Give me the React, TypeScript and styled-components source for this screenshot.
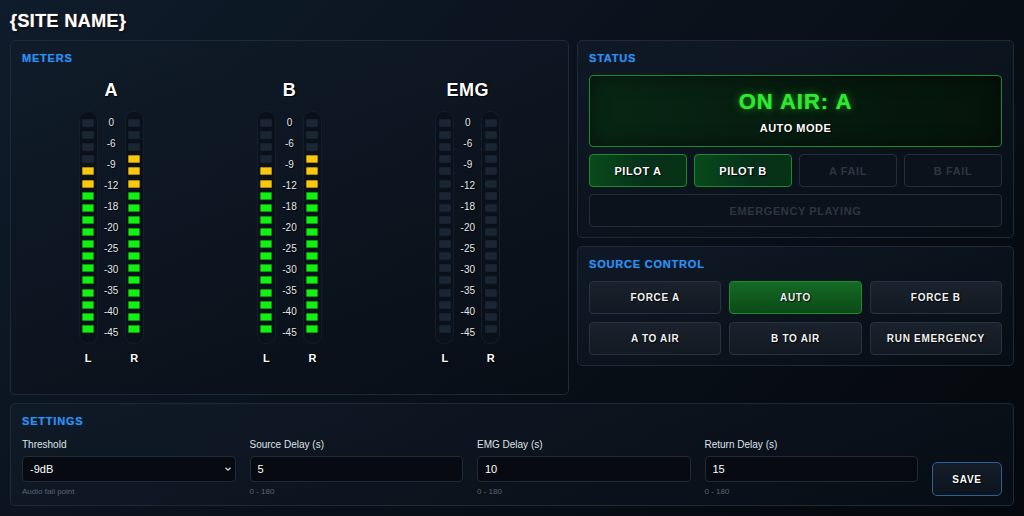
import styled, { createGlobalStyle } from 'styled-components'

const GlobalStyle = createGlobalStyle`
  html, body {
    margin: 0;
    padding: 0;
  }
  body {
    background: linear-gradient(135deg, #0f1c2b 0%, #0a121c 45%, #05080c 100%);
    min-height: 100vh;
    color: #fff;
    font-family: 'Liberation Sans', Arial, sans-serif;
  }
  * {
    box-sizing: border-box;
  }
`

type Zone = 'red' | 'yellow' | 'green'

const SEGMENTS = 18
const SCALE = ['0', '-6', '-9', '-12', '-18', '-20', '-25', '-30', '-35', '-40', '-45']

const meters = [
  { name: 'A', left: 14, right: 15 },
  { name: 'B', left: 14, right: 15 },
  { name: 'EMG', left: 0, right: 0 },
]

const zoneFor = (i: number): Zone => (i < 3 ? 'red' : i < 6 ? 'yellow' : 'green')

const MeterBar = ({ level }: { level: number }) => (
  <Bar>
    {Array.from({ length: SEGMENTS }, (_, i) => {
      const lit = i >= SEGMENTS - level
      return <Segment key={i} $zone={zoneFor(i)} $lit={lit} />
    })}
  </Bar>
)

const App = () => {
  return (
    <>
      <GlobalStyle />
      <Page>
        <SiteTitle>{'{SITE NAME}'}</SiteTitle>

        <TopGrid>
          <Panel>
            <PanelTitle>Meters</PanelTitle>
            <MeterGrid>
              {meters.map((m) => (
                <MeterGroup key={m.name}>
                  <MeterName>{m.name}</MeterName>
                  <MeterRow>
                    <MeterBar level={m.left} />
                    <Scale>
                      {SCALE.map((s) => (
                        <ScaleMark key={s}>{s}</ScaleMark>
                      ))}
                    </Scale>
                    <MeterBar level={m.right} />
                  </MeterRow>
                  <ChannelRow>
                    <Channel>L</Channel>
                    <span />
                    <Channel>R</Channel>
                  </ChannelRow>
                </MeterGroup>
              ))}
            </MeterGrid>
          </Panel>

          <SideColumn>
            <Panel>
              <PanelTitle>Status</PanelTitle>
              <OnAirBox>
                <OnAirText>ON AIR: A</OnAirText>
                <ModeText>AUTO MODE</ModeText>
              </OnAirBox>
              <IndicatorRow>
                <Indicator $active>PILOT A</Indicator>
                <Indicator $active>PILOT B</Indicator>
                <Indicator>A FAIL</Indicator>
                <Indicator>B FAIL</Indicator>
              </IndicatorRow>
              <Indicator>EMERGENCY PLAYING</Indicator>
            </Panel>

            <Panel>
              <PanelTitle>Source Control</PanelTitle>
              <ControlGrid>
                <ControlButton>FORCE A</ControlButton>
                <ControlButton $active>AUTO</ControlButton>
                <ControlButton>FORCE B</ControlButton>
                <ControlButton>A TO AIR</ControlButton>
                <ControlButton>B TO AIR</ControlButton>
                <ControlButton>RUN EMERGENCY</ControlButton>
              </ControlGrid>
            </Panel>
          </SideColumn>
        </TopGrid>

        <SettingsPanel>
          <PanelTitle>Settings</PanelTitle>
          <SettingsRow>
            <Field>
              <FieldLabel>Threshold</FieldLabel>
              <SelectWrap>
                <Select defaultValue='-9'>
                  <option value='-6'>-6dB</option>
                  <option value='-9'>-9dB</option>
                  <option value='-12'>-12dB</option>
                  <option value='-18'>-18dB</option>
                </Select>
                <Chevron viewBox='0 0 10 10'>
                  <path d='M2.5 3.8 L5 6.2 L7.5 3.8' />
                </Chevron>
              </SelectWrap>
              <Hint>Audio fail point</Hint>
            </Field>
            <Field>
              <FieldLabel>Source Delay (s)</FieldLabel>
              <Input type='text' defaultValue='5' />
              <Hint>0 - 180</Hint>
            </Field>
            <Field>
              <FieldLabel>EMG Delay (s)</FieldLabel>
              <Input type='text' defaultValue='10' />
              <Hint>0 - 180</Hint>
            </Field>
            <Field>
              <FieldLabel>Return Delay (s)</FieldLabel>
              <Input type='text' defaultValue='15' />
              <Hint>0 - 180</Hint>
            </Field>
            <SaveButton>SAVE</SaveButton>
          </SettingsRow>
        </SettingsPanel>
      </Page>
    </>
  )
}

const heavyShadow = '1px 1px 1px rgba(0, 0, 0, 0.85), 0 0 1px rgba(0, 0, 0, 0.9)'

const Page = styled.div`
  padding: 10px;
  display: flex;
  flex-direction: column;
`

const SiteTitle = styled.h1`
  margin: 0 0 8px;
  font-size: 18px;
  line-height: 22px;
  font-weight: 700;
  letter-spacing: 0.4px;
  color: #fff;
  text-shadow: 1px 1px 2px rgba(0, 0, 0, 0.9), 0 0 1px #fff;
`

const TopGrid = styled.div`
  display: grid;
  grid-template-columns: 559px 1fr;
  gap: 8px;
  align-items: start;
`

const SideColumn = styled.div`
  display: flex;
  flex-direction: column;
  gap: 8px;
`

const Panel = styled.section`
  background: linear-gradient(160deg, rgba(17, 28, 42, 0.75), rgba(8, 14, 22, 0.85));
  border: 1px solid #1e2a38;
  border-radius: 5px;
  padding: 11px 11px 10px;
  display: flex;
  flex-direction: column;
  gap: 7px;
`

const PanelTitle = styled.h2`
  margin: 0 0 3px;
  font-size: 11px;
  line-height: 13px;
  font-weight: 700;
  letter-spacing: 0.8px;
  text-transform: uppercase;
  color: #2f8ff0;
  text-shadow: 0 0 1px rgba(47, 143, 240, 0.6);
`

const MeterGrid = styled.div`
  display: grid;
  grid-template-columns: repeat(3, 1fr);
  padding: 4px 0 19px;
`

const MeterGroup = styled.div`
  display: flex;
  flex-direction: column;
  align-items: center;
`

const MeterName = styled.div`
  font-size: 18px;
  line-height: 22px;
  font-weight: 700;
  letter-spacing: 0.5px;
  margin-bottom: 10px;
  text-shadow: ${heavyShadow};
`

const MeterRow = styled.div`
  display: flex;
  align-items: stretch;
`

const Bar = styled.div`
  width: 19px;
  height: 233px;
  padding: 7px 3px 10px;
  border-radius: 9px;
  background: #0a111b;
  border: 1px solid #141e2a;
  display: flex;
  flex-direction: column;
  justify-content: space-between;
  align-items: center;
`

const litColors: Record<Zone, { bg: string; edge: string }> = {
  red: { bg: '#f03030', edge: '#a01818' },
  yellow: { bg: '#f8c80e', edge: '#b08a08' },
  green: { bg: '#14f014', edge: '#0a9a0a' },
}

const Segment = styled.div<{ $zone: Zone; $lit: boolean }>`
  width: 12px;
  height: 8px;
  border-radius: 1px;
  background: ${(p) => (p.$lit ? litColors[p.$zone].bg : '#1a2634')};
  border: 1px solid ${(p) => (p.$lit ? litColors[p.$zone].edge : '#17212e')};
`

const Scale = styled.div`
  width: 27px;
  padding: 6px 0 5px;
  display: flex;
  flex-direction: column;
  justify-content: space-between;
  align-items: center;
`

const ScaleMark = styled.span`
  font-size: 10px;
  line-height: 12px;
  color: #e6e9ec;
  text-shadow: ${heavyShadow};
`

const ChannelRow = styled.div`
  display: grid;
  grid-template-columns: 19px 27px 19px;
  margin-top: 7px;
`

const Channel = styled.span`
  text-align: center;
  font-size: 11px;
  line-height: 14px;
  font-weight: 700;
  color: #fff;
  text-shadow: ${heavyShadow};
`

const OnAirBox = styled.div`
  height: 72px;
  border: 1px solid #1b8a2a;
  border-radius: 4px;
  background: linear-gradient(90deg, #082614 0%, #061a0e 60%, #05140b 100%);
  box-shadow: inset 0 0 18px rgba(0, 0, 0, 0.5);
  display: flex;
  flex-direction: column;
  align-items: center;
  justify-content: center;
  gap: 8px;
`

const OnAirText = styled.div`
  font-size: 22px;
  line-height: 24px;
  font-weight: 700;
  letter-spacing: 1px;
  color: #2ee82e;
  text-shadow: 0 0 8px rgba(40, 230, 40, 0.55), 0 0 1px #2ee82e;
  margin-top: 2px;
`

const ModeText = styled.div`
  font-size: 11px;
  line-height: 13px;
  font-weight: 700;
  letter-spacing: 0.5px;
  color: #fff;
  text-shadow: ${heavyShadow};
`

const IndicatorRow = styled.div`
  display: grid;
  grid-template-columns: repeat(4, 1fr);
  gap: 7px;
`

const Indicator = styled.div<{ $active?: boolean }>`
  height: 33px;
  border-radius: 4px;
  display: flex;
  align-items: center;
  justify-content: center;
  font-size: 11px;
  font-weight: 700;
  letter-spacing: 0.6px;
  border: 1px solid ${(p) => (p.$active ? '#1d8a2e' : '#232e3b')};
  background: ${(p) =>
    p.$active ? 'linear-gradient(90deg, #0a4a1a, #06301a 60%, #083214)' : '#0b121b'};
  color: ${(p) => (p.$active ? '#fff' : '#2c3642')};
  text-shadow: ${(p) => (p.$active ? heavyShadow : 'none')};
`

const ControlGrid = styled.div`
  display: grid;
  grid-template-columns: repeat(3, 1fr);
  gap: 8px;
`

const ControlButton = styled.button<{ $active?: boolean }>`
  height: 33px;
  border-radius: 4px;
  font-family: 'Liberation Sans', Arial, sans-serif;
  font-size: 10px;
  font-weight: 700;
  letter-spacing: 0.7px;
  color: #f2f2f2;
  cursor: pointer;
  border: 1px solid ${(p) => (p.$active ? '#1f8a2f' : '#29333f')};
  background: ${(p) =>
    p.$active
      ? 'linear-gradient(180deg, #146a24, #0c4a18)'
      : 'linear-gradient(180deg, #1a222d, #121922)'};
  text-shadow: ${heavyShadow};
`

const SettingsPanel = styled(Panel)`
  margin-top: 8px;
  padding: 11px 11px 8px;
  gap: 0;
`

const SettingsRow = styled.div`
  display: grid;
  grid-template-columns: repeat(4, 1fr) 70px;
  gap: 14px;
  align-items: end;
  margin-top: 7px;
`

const Field = styled.div`
  display: flex;
  flex-direction: column;
`

const FieldLabel = styled.label`
  font-size: 10px;
  line-height: 13px;
  color: #dfe3e8;
  margin-bottom: 5px;
`

const fieldBox = `
  width: 100%;
  height: 26px;
  background: #070b11;
  border: 1px solid #212b38;
  border-radius: 4px;
  color: #fff;
  font-family: 'Liberation Sans', Arial, sans-serif;
  font-size: 11px;
  padding: 0 7px;
  outline: none;
`

const Input = styled.input`
  ${fieldBox}
`

const SelectWrap = styled.div`
  position: relative;
`

const Select = styled.select`
  ${fieldBox}
  appearance: none;
`

const Chevron = styled.svg`
  position: absolute;
  right: 3px;
  top: 8px;
  width: 10px;
  height: 10px;
  fill: none;
  stroke: #d8dde2;
  stroke-width: 1.3;
  pointer-events: none;
`

const Hint = styled.span`
  margin-top: 4px;
  font-size: 8px;
  line-height: 11px;
  color: #5c6672;
`

const SaveButton = styled.button`
  height: 34px;
  margin-bottom: 1px;
  border-radius: 5px;
  border: 1px solid #2c5e98;
  background: linear-gradient(180deg, #141d29, #0d141d);
  color: #fff;
  font-family: 'Liberation Sans', Arial, sans-serif;
  font-size: 10px;
  font-weight: 700;
  letter-spacing: 0.7px;
  cursor: pointer;
  text-shadow: ${heavyShadow};
`

export default App
